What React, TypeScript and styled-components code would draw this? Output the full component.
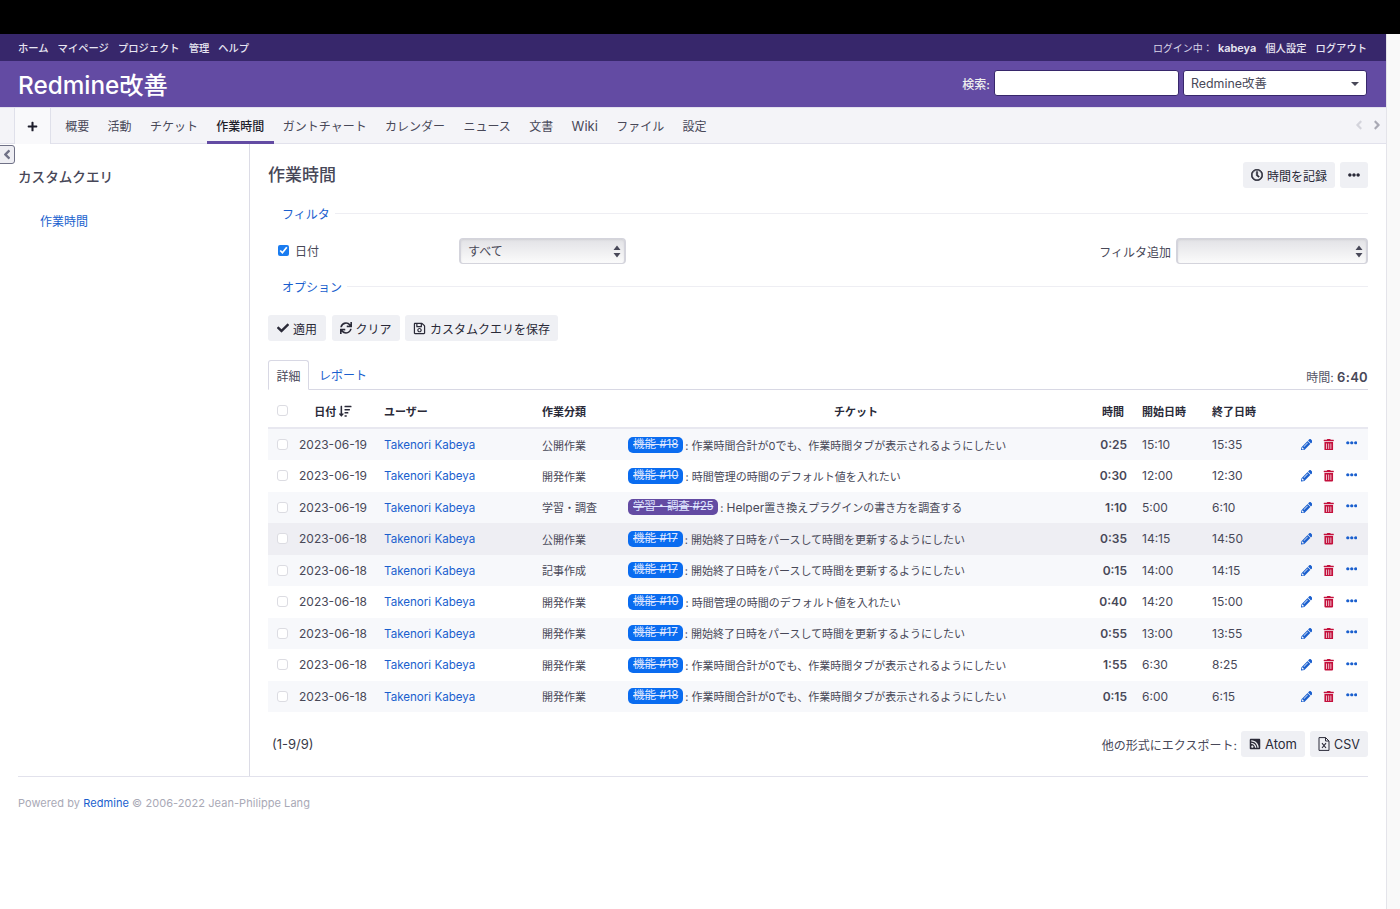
import React from "react";
import styled, { createGlobalStyle } from "styled-components";
import {
  FaPlus, FaCheck, FaSync, FaRegSave, FaRegClock, FaEllipsisH, FaPencilAlt, FaTrashAlt,
  FaRssSquare, FaSortAmountDown, FaAngleLeft, FaAngleRight,
} from "react-icons/fa";

const Global = createGlobalStyle`
  html, body { margin: 0; padding: 0; background: #fff; }
  body { font-family: Inter, "Noto Sans CJK JP", sans-serif; font-size: 12px; color: #484858; }
  * { box-sizing: border-box; }
`;

const BlackBar = styled.div`height: 34px; background: #000;`;
const Page = styled.div`display: flex; min-height: 875px;`;
const Main = styled.div`width: 1387px; border-right: 1px solid #e4e4ea;`;
const Track = styled.div`flex: 1; background: #f9f9f9;`;

const TopMenu = styled.div`
  height: 27px; background: #37276b; display: flex; align-items: center; justify-content: space-between;
  padding: 0 19px 0 18px; color: #e8e6f2; font-size: 10.3px; font-weight: 500;
`;
const MenuGroup = styled.div`display: flex; gap: 9px; align-items: center;`;
const LoginLabel = styled.span`color: #d9d5e8; font-weight: 400; font-size: 10px; margin-right: 5px;`;
const LoginName = styled.b`font-size: 11px; font-weight: 600;`;

const Header = styled.div`
  height: 46px; background: #634ba3; display: flex; align-items: center; justify-content: space-between;
  padding: 0 19px 0 18px; color: #fff;
`;
const Title = styled.h1`margin: 2px 0 0; font-size: 24.3px; font-weight: 500; line-height: 46px;`;
const SearchArea = styled.div`display: flex; align-items: center; gap: 4px; font-size: 12px; font-weight: 500; color: #eee; margin-top: -2px;`;
const SearchInput = styled.input`
  width: 185px; height: 26px; border: 1px solid #37276b; border-radius: 3px; background: #fff;
`;
const ProjectJump = styled.div`
  position: relative; width: 184px; height: 26px; background: #fff; border: 1px solid #37276b; border-radius: 3px;
  color: #484858; font-size: 12.4px; font-weight: 400; line-height: 25px; padding-left: 7px;
`;
const JumpCaret = styled.span`
  position: absolute; right: 7px; top: 11px; width: 0; height: 0;
  border-left: 4px solid transparent; border-right: 4px solid transparent; border-top: 4px solid #484858;
`;

const Tabs = styled.div`
  height: 37px; background: #f4f4f8; border-bottom: 1px solid #e2e2ec; border-top: 1px solid #e2e0ee;
  display: flex; align-items: stretch; padding-left: 14px; position: relative;
`;
const PlusTab = styled.div`
  width: 37px; height: 36px; background: #f9f9fb; border-left: 1px solid #dfe0ea; border-right: 1px solid #dfe0ea;
  display: flex; align-items: center; justify-content: center; color: #1d1d2b; font-size: 11px; margin-right: 5px;
`;
const TabItem = styled.div<{ $active?: boolean; $latin?: boolean }>`
  padding: 2px 9.2px 0; display: flex; align-items: center; font-size: ${p => (p.$latin ? 13 : 12)}px;
  color: ${p => (p.$active ? "#1d1d2b" : "#484858")};
  font-weight: ${p => (p.$active ? 500 : 400)};
  border-bottom: 3px solid ${p => (p.$active ? "#634ba3" : "transparent")};
  height: 36px;
`;
const TabArrows = styled.div`
  position: absolute; right: 2px; top: 10px; display: flex; gap: 4px; font-size: 14px;
`;
const DimArrow = styled.span<{ $dark?: boolean }>`color: ${p => (p.$dark ? "#a9a9b4" : "#d4d4dc")}; display: flex;`;

const Body = styled.div`display: flex; height: 632px; position: relative;`;
const SideToggle = styled.div`
  position: absolute; left: -1px; top: 1px; width: 16px; height: 19px; border: 1.5px solid #6f7186; border-radius: 0 3px 3px 0;
  background: #eeeef3; display: flex; align-items: center; justify-content: center; color: #6f7186; font-size: 15px;
`;
const Sidebar = styled.aside`width: 250px; border-right: 1px solid #dcdce6; padding: 24px 18px 0;`;
const SideTitle = styled.h3`margin: 0; font-size: 13.6px; font-weight: 500; color: #484858; line-height: 18px;`;
const SideLink = styled.a`display: block; margin: 27px 0 0 22px; color: #1a5fce; font-size: 12px; line-height: 18px;`;

const Content = styled.main`flex: 1; padding: 19px 18px 0 18px;`;
const ContentHead = styled.div`display: flex; justify-content: space-between; align-items: center; height: 24px;`;
const PageTitle = styled.h2`margin: -3px 0 0; font-size: 17px; font-weight: 500; color: #484858;`;
const BtnRow = styled.div`display: flex; gap: 5px; align-items: center;`;
const Btn = styled.button<{ $size?: number; $min?: number }>`
  height: 26px; padding: 0 8px; border: none; border-radius: 3px; background: #eff0f4; color: #2a2a38;
  font-family: inherit; font-size: ${p => p.$size ?? 12}px; display: flex; align-items: center; justify-content: center; gap: 4px;
  min-width: ${p => p.$min ?? 0}px;
`;
const BtnIcon = styled.span<{ $size?: number; $bold?: boolean }>`
  display: flex; font-size: ${p => p.$size ?? 12}px;
  svg { stroke: currentColor; stroke-width: ${p => (p.$bold ? 24 : 0)}px; }
`;
const CsvIcon = styled.svg`width: 12px; height: 14px; display: block;`;
const Legend = styled.div`
  display: flex; align-items: center; margin-left: 14px; color: #1a5fce; font-size: 12px; gap: 5px; height: 16px;
`;
const LegendLine = styled.span`flex: 1; height: 1px; background: #eeeef3;`;
const FilterLegend = styled(Legend)`margin-top: 18px;`;
const OptionLegend = styled(Legend)`margin-top: 14px;`;
const FilterRow = styled.div`display: flex; align-items: center; margin-top: 17px; height: 26px;`;
const FilterCheck = styled.input`width: 11px; height: 11px; margin: 0 6px 2px 10px; accent-color: #1a7cf0;`;
const FilterName = styled.label`width: 164px; font-size: 12px; margin-bottom: 1px;`;
const SelectBox = styled.div<{ $w: number }>`
  position: relative; width: ${p => p.$w}px; height: 26px; border-radius: 4px; border: 1px solid #d4d4dc;
  border-left-width: 2px; border-right-width: 2px;
  background: linear-gradient(#e2e2e6, #fbfbfb); box-shadow: inset 0 1px 2px rgba(0,0,0,.08);
  font-size: 12px; line-height: 25px; padding-left: 7px; color: #484858;
`;
const SelectArrows = styled.svg`position: absolute; right: 3px; top: 6px; width: 8px; height: 13px;`;
const FilterAdd = styled.div`margin-left: auto; display: flex; align-items: center; gap: 5px; font-size: 12px;`;
const ActionRow = styled.div`display: flex; gap: 5.5px; margin-top: 21px;`;

const TabLine = styled.div`
  display: flex; align-items: flex-end; height: 30px; margin-top: 19px; border-bottom: 1px solid #d8d8e4; position: relative;
`;
const DetailTab = styled.div`
  height: 30px; width: 41px; border: 1px solid #d8d8e4; border-bottom: 1px solid #fff; margin-bottom: -1px; border-radius: 3px 3px 0 0;
  display: flex; align-items: center; justify-content: center; font-size: 12px; background: #fff;
`;
const ReportTab = styled.div`height: 30px; display: flex; align-items: center; margin-left: 10px; color: #1a5fce; font-size: 12px;`;
const Total = styled.div`position: absolute; right: 0; bottom: 4px; font-size: 12px; color: #555566;`;
const TotalValue = styled.b`font-size: 13px; font-weight: 600; color: #484858; letter-spacing: 0.3px;`;

const Table = styled.table`width: 100%; border-collapse: collapse; table-layout: fixed; margin-top: 4px;`;
const HeadRow = styled.tr`height: 34px; border-bottom: 2px solid #e8e8f0;`;
const Th = styled.th<{ $left?: boolean; $pl?: number; $pr?: number }>`
  font-size: 11px; font-weight: 600; color: #2a2a38; padding: 0 ${p => p.$pr ?? 0}px 0 ${p => p.$pl ?? 0}px;
  text-align: ${p => (p.$left ? "left" : "center")};
`;
const SortIcon = styled.span`display: inline-flex; vertical-align: -2px; margin-left: 3px; font-size: 12.5px;`;
const Row = styled.tr<{ $tone: "odd" | "even" | "hover" }>`
  height: 31.5px;
  background: ${p => (p.$tone === "hover" ? "#eeeef3" : p.$tone === "odd" ? "#f7f8fb" : "#fff")};
`;
const Cell = styled.td<{ $pl?: number }>`padding: 0 0 0 ${p => p.$pl ?? 0}px; font-size: 12px; color: #484858; white-space: nowrap;`;
const SmallCell = styled(Cell)`font-size: 11px;`;
const UserLink = styled.a`color: #1a5fce; font-size: 11.6px;`;
const HoursCell = styled(Cell)`text-align: right; font-weight: 600; padding-right: 6px; font-size: 12px;`;
const Tick = styled.span`display: block; margin-left: 9px; width: 11px; height: 11px; border: 1px solid #dcdce2; border-radius: 3px; background: #fff;`;
const IssueLine = styled.div`display: flex; align-items: center; height: 31px;`;
const Badge = styled.span<{ $purple?: boolean }>`
  height: 16px; line-height: 15px; padding: 0 5px; border-radius: 5px; font-size: 11.5px;
  background: ${p => (p.$purple ? "#634ba3" : "#0a6cf0")}; color: #dfe6ff; text-decoration: line-through; margin-right: 2px;
  letter-spacing: ${p => (p.$purple ? -0.2 : 0)}px;
`;
const IssueText = styled.span`font-size: 11px;`;
const IssueLatin = styled.span`font-size: 12px;`;
const Actions = styled.div`display: flex; align-items: center; justify-content: flex-end; gap: 11px; padding-right: 11px;`;
const EditIcon = styled.span`display: flex; color: #1a5fce; font-size: 11.5px;`;
const DeleteIcon = styled.span`display: flex; color: #c4103c; font-size: 11.5px;`;
const MoreIcon = styled.span`display: flex; color: #1a5fce; font-size: 11.5px; margin-top: -3px;`;

const Bottom = styled.div`display: flex; justify-content: space-between; align-items: center; margin-top: 19px; padding-left: 4px;`;
const Pager = styled.span`font-size: 13px; color: #3a3a48;`;
const ExportRow = styled.div`display: flex; align-items: center; gap: 5px; font-size: 12px;`;
const ExportLabel = styled.span`margin-right: -1px;`;

const Footer = styled.footer`
  margin: 0 18px; border-top: 1px solid #e2e2ec; padding-top: 19px; font-size: 11px; color: #a9a9b6; letter-spacing: 0.06px; line-height: 14px;
`;
const FooterLink = styled.a`color: #1a5fce;`;

const Arrows = () => (
  <SelectArrows viewBox="0 0 8 13"><path d="M4 0.5 7.5 5H.5zM4 12.5 .5 8h7z" fill="#484858" /></SelectArrows>
);

type E = { date: string; act: string; kind: string; no: string; latin?: string; text: string; h: string; s: string; e: string; };
const T18 = "作業時間合計が0でも、作業時間タブが表示されるようにしたい";
const T10 = "時間管理の時間のデフォルト値を入れたい";
const T17 = "開始終了日時をパースして時間を更新するようにしたい";
const entries: E[] = [
  { date: "2023-06-19", act: "公開作業", kind: "機能", no: "#18", text: T18, h: "0:25", s: "15:10", e: "15:35" },
  { date: "2023-06-19", act: "開発作業", kind: "機能", no: "#10", text: T10, h: "0:30", s: "12:00", e: "12:30" },
  { date: "2023-06-19", act: "学習・調査", kind: "学習・調査", no: "#25", latin: "Helper", text: "置き換えプラグインの書き方を調査する", h: "1:10", s: "5:00", e: "6:10" },
  { date: "2023-06-18", act: "公開作業", kind: "機能", no: "#17", text: T17, h: "0:35", s: "14:15", e: "14:50" },
  { date: "2023-06-18", act: "記事作成", kind: "機能", no: "#17", text: T17, h: "0:15", s: "14:00", e: "14:15" },
  { date: "2023-06-18", act: "開発作業", kind: "機能", no: "#10", text: T10, h: "0:40", s: "14:20", e: "15:00" },
  { date: "2023-06-18", act: "開発作業", kind: "機能", no: "#17", text: T17, h: "0:55", s: "13:00", e: "13:55" },
  { date: "2023-06-18", act: "開発作業", kind: "機能", no: "#18", text: T18, h: "1:55", s: "6:30", e: "8:25" },
  { date: "2023-06-18", act: "開発作業", kind: "機能", no: "#18", text: T18, h: "0:15", s: "6:00", e: "6:15" },
];
const tabs = ["概要", "活動", "チケット", "作業時間", "ガントチャート", "カレンダー", "ニュース", "文書", "Wiki", "ファイル", "設定"];

export default function App() {
  return (
    <>
      <Global />
      <BlackBar />
      <Page>
        <Main>
          <TopMenu>
            <MenuGroup>
              <span>ホーム</span><span>マイページ</span><span>プロジェクト</span><span>管理</span><span>ヘルプ</span>
            </MenuGroup>
            <MenuGroup>
              <span><LoginLabel>ログイン中：</LoginLabel><LoginName>kabeya</LoginName></span><span>個人設定</span><span>ログアウト</span>
            </MenuGroup>
          </TopMenu>
          <Header>
            <Title>Redmine改善</Title>
            <SearchArea>
              検索:
              <SearchInput />
              <ProjectJump>Redmine改善<JumpCaret /></ProjectJump>
            </SearchArea>
          </Header>
          <Tabs>
            <PlusTab><FaPlus /></PlusTab>
            {tabs.map(t => <TabItem key={t} $active={t === "作業時間"} $latin={t === "Wiki"}>{t}</TabItem>)}
            <TabArrows>
              <DimArrow><FaAngleLeft /></DimArrow>
              <DimArrow $dark><FaAngleRight /></DimArrow>
            </TabArrows>
          </Tabs>
          <Body>
            <SideToggle><FaAngleLeft /></SideToggle>
            <Sidebar>
              <SideTitle>カスタムクエリ</SideTitle>
              <SideLink>作業時間</SideLink>
            </Sidebar>
            <Content>
              <ContentHead>
                <PageTitle>作業時間</PageTitle>
                <BtnRow>
                  <Btn><BtnIcon $bold><FaRegClock /></BtnIcon>時間を記録</Btn>
                  <Btn><BtnIcon><FaEllipsisH /></BtnIcon></Btn>
                </BtnRow>
              </ContentHead>
              <FilterLegend>フィルタ<LegendLine /></FilterLegend>
              <FilterRow>
                <FilterCheck type="checkbox" defaultChecked />
                <FilterName>日付</FilterName>
                <SelectBox $w={167}>すべて<Arrows /></SelectBox>
                <FilterAdd>フィルタ追加<SelectBox $w={192}><Arrows /></SelectBox></FilterAdd>
              </FilterRow>
              <OptionLegend>オプション<LegendLine /></OptionLegend>
              <ActionRow>
                <Btn $min={58}><BtnIcon><FaCheck /></BtnIcon>適用</Btn>
                <Btn><BtnIcon><FaSync /></BtnIcon>クリア</Btn>
                <Btn><BtnIcon $size={13}><FaRegSave /></BtnIcon>カスタムクエリを保存</Btn>
              </ActionRow>
              <TabLine>
                <DetailTab>詳細</DetailTab>
                <ReportTab>レポート</ReportTab>
                <Total>時間: <TotalValue>6:40</TotalValue></Total>
              </TabLine>
              <Table>
                <colgroup>
                  <col width="31" /><col width="85" /><col width="158" /><col width="86" /><col width="469" />
                  <col width="36" /><col width="70" /><col width="80" /><col />
                </colgroup>
                <thead>
                  <HeadRow>
                    <Th $left><Tick /></Th>
                    <Th $pr={17}>日付<SortIcon><FaSortAmountDown /></SortIcon></Th>
                    <Th $left>ユーザー</Th>
                    <Th $left>作業分類</Th>
                    <Th $pr={13}>チケット</Th>
                    <Th $pr={4}>時間</Th>
                    <Th $left $pl={9}>開始日時</Th>
                    <Th $left $pl={9}>終了日時</Th>
                    <Th />
                  </HeadRow>
                </thead>
                <tbody>
                  {entries.map((r, i) => (
                    <Row key={i} $tone={i === 3 ? "hover" : i % 2 === 0 ? "odd" : "even"}>
                      <Cell><Tick /></Cell>
                      <Cell>{r.date}</Cell>
                      <Cell><UserLink>Takenori Kabeya</UserLink></Cell>
                      <SmallCell>{r.act}</SmallCell>
                      <Cell>
                        <IssueLine>
                          <Badge $purple={r.kind !== "機能"}>{r.kind} {r.no}</Badge>
                          <IssueText>: {r.latin && <IssueLatin>{r.latin}</IssueLatin>}{r.text}</IssueText>
                        </IssueLine>
                      </Cell>
                      <HoursCell>{r.h}</HoursCell>
                      <Cell $pl={9}>{r.s}</Cell>
                      <Cell $pl={9}>{r.e}</Cell>
                      <Cell>
                        <Actions>
                          <EditIcon><FaPencilAlt /></EditIcon>
                          <DeleteIcon><FaTrashAlt /></DeleteIcon>
                          <MoreIcon><FaEllipsisH /></MoreIcon>
                        </Actions>
                      </Cell>
                    </Row>
                  ))}
                </tbody>
              </Table>
              <Bottom>
                <Pager>(1-9/9)</Pager>
                <ExportRow>
                  <ExportLabel>他の形式にエクスポート:</ExportLabel>
                  <Btn $size={13} $min={64}><BtnIcon><FaRssSquare /></BtnIcon>Atom</Btn>
                  <Btn $size={12.5} $min={58}>
                    <CsvIcon viewBox="0 0 12 14" fill="none" stroke="currentColor">
                      <path d="M1 .6h6.6L11 4v9.4H1zM7.5.6V4H11" strokeWidth="1" />
                      <path d="M4 6.2 8 11M8 6.2 4 11" strokeWidth="1.1" />
                    </CsvIcon>
                    CSV
                  </Btn>
                </ExportRow>
              </Bottom>
            </Content>
          </Body>
          <Footer>Powered by <FooterLink>Redmine</FooterLink> © 2006-2022 Jean-Philippe Lang</Footer>
        </Main>
        <Track />
      </Page>
    </>
  );
}
